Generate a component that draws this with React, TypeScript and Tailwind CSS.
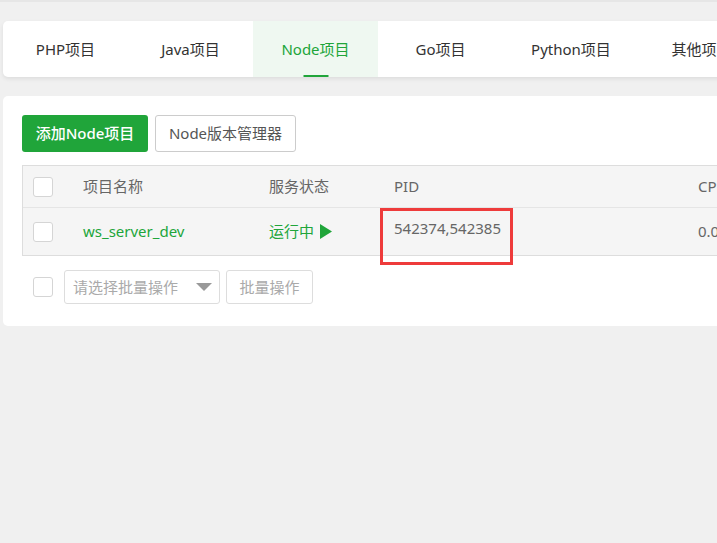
import React from 'react';

const tabs = [
  { label: 'PHP项目', w: 'w-[125px]' },
  { label: 'Java项目', w: 'w-[125px]' },
  { label: 'Node项目', w: 'w-[125px]' },
  { label: 'Go项目', w: 'w-[125px]' },
  { label: 'Python项目', w: 'w-[136px]' },
  { label: '其他项目', w: 'w-[125px]' },
];

function Checkbox() {
  return <span className="block w-[20px] h-[20px] bg-white border border-[#d5d5d5] rounded-[3px]" />;
}

export default function App() {
  const font = { fontFamily: '"Noto Sans", "Noto Sans CJK SC", sans-serif' };

  return (
    <div
      className="w-[717px] h-[543px] overflow-hidden bg-[#f0f0f0] border-t-2 border-[#e6e6e6]"
      style={font}
    >
      {/* 标签栏 */}
      <div className="ml-[3px] mt-[19px] w-[1000px] h-[56px] bg-white rounded-l-[5px] shadow-[0_2px_4px_rgba(0,0,0,0.08)] flex">
        {tabs.map((t, i) => {
          const active = i === 2;
          return (
            <div
              key={t.label}
              className={`relative ${t.w} shrink-0 h-full flex items-center justify-center text-[15px] ${
                active ? 'bg-[#eff8f1] text-[#20a53a]' : 'text-[#333]'
              }`}
            >
              {t.label}
              {active && (
                <span className="absolute bottom-0 left-1/2 -translate-x-1/2 w-[25px] h-[2px] bg-[#20a53a]" />
              )}
            </div>
          );
        })}
      </div>

      {/* 主体卡片 */}
      <div className="ml-[3px] mt-[19px] w-[1000px] h-[230px] bg-white rounded-l-[5px] pl-[19px] pt-[19px]">
        <div className="flex gap-[7px]">
          <button className="h-[37px] w-[126px] rounded-[3px] bg-[#20a53a] text-white text-[15px] font-medium">
            添加Node项目
          </button>
          <button className="h-[37px] w-[141px] rounded-[3px] bg-white border border-[#ccc] text-[#555] text-[15px]">
            Node版本管理器
          </button>
        </div>

        {/* 表格 */}
        <div className="relative mt-[13px] border-t border-l border-b border-[#ddd] text-[15px]">
          <div className="flex items-center h-[42px] bg-[#f5f5f5] border-b border-[#e5e5e5] text-[#666]">
            <div className="w-[60px] pl-[10px]"><Checkbox /></div>
            <div className="w-[186px]">项目名称</div>
            <div className="w-[125px]">服务状态</div>
            <div className="w-[304px]">PID</div>
            <div>CPU</div>
          </div>
          <div className="flex items-center h-[47px] bg-[#f5f5f5]">
            <div className="w-[60px] pl-[10px]"><Checkbox /></div>
            <div className="w-[186px] text-[#20a53a]">ws_server_dev</div>
            <div className="w-[125px] text-[#20a53a] flex items-center gap-[6px]">
              运行中
              <svg width="12" height="15" viewBox="0 0 12 15">
                <path d="M0 0 L12 7.5 L0 15 Z" fill="#20a53a" />
              </svg>
            </div>
            <div className="w-[304px] text-[#666] -mt-[6px]">542374,542385</div>
            <div className="text-[#666]">0.08%</div>
          </div>
          {/* 标注框 */}
          <div className="absolute left-[357px] top-[42px] w-[133px] h-[57px] border-[3px] border-[#ee3b3b]" />
        </div>

        {/* 批量操作 */}
        <div className="flex items-center mt-[14px] pl-[11px] gap-[11px]">
          <Checkbox />
          <div className="flex items-center justify-between w-[156px] h-[34px] border border-[#ddd] rounded-[3px] pl-[8px] pr-[7px] text-[15px] text-[#aaa]">
            请选择批量操作
            <svg width="16" height="8" viewBox="0 0 16 8">
              <path d="M0 0 L16 0 L8 8 Z" fill="#999" />
            </svg>
          </div>
          <button className="-ml-[5px] h-[34px] w-[87px] border border-[#ddd] rounded-[3px] text-[15px] text-[#aaa] bg-white">
            批量操作
          </button>
        </div>
      </div>
    </div>
  );
}
